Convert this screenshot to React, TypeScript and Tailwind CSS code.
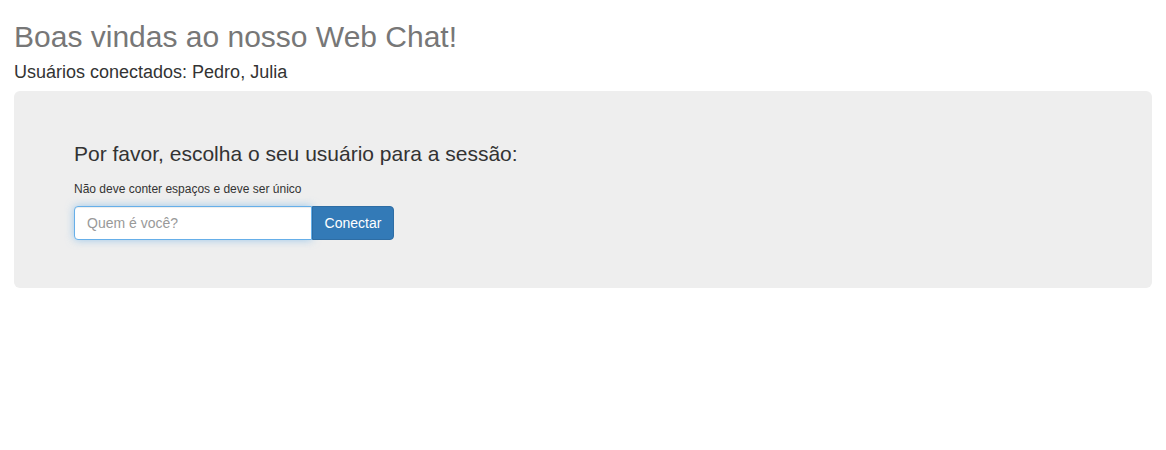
export default function App() {
  return (
    <div className="min-h-screen bg-white px-[14px] pt-[19px] font-['Liberation_Sans',Arial,sans-serif] text-[#333]">
      <h1 className="text-[30px] leading-[36px] text-[#777]">Boas vindas ao nosso Web Chat!</h1>
      <h4 className="mt-[7px] text-[18px] leading-[20px]">Usuários conectados: Pedro, Julia</h4>
      <div className="mt-[9px] rounded-[6px] bg-[#eee] px-[60px] py-[48px]">
        <p className="text-[21px] leading-[30px]">Por favor, escolha o seu usuário para a sessão:</p>
        <label className="mt-[12px] block text-[12px] leading-[17px]">Não deve conter espaços e deve ser único</label>
        <div className="mt-[8px] flex">
          <input
            autoFocus
            type="text"
            placeholder="Quem é você?"
            className="h-[34px] w-[238px] rounded-l-[4px] border border-[#66afe9] bg-white px-[12px] text-[14px] text-[#555] placeholder:text-[#999] outline-none shadow-[inset_0_1px_1px_rgba(0,0,0,0.075),0_0_8px_rgba(102,175,233,0.6)]"
          />
          <button className="h-[34px] w-[82px] rounded-r-[4px] border border-[#2e6da4] bg-[#337ab7] text-[14px] text-white">
            Conectar
          </button>
        </div>
      </div>
    </div>
  );
}
